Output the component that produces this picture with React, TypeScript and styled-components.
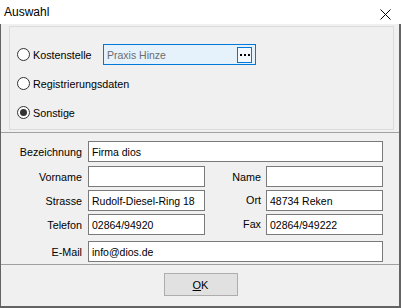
import React from 'react'
import styled, { createGlobalStyle } from 'styled-components'

const GlobalStyle = createGlobalStyle`
  html, body {
    margin: 0;
    padding: 0;
    background-color: #F0F0F0;
  }
  * {
    box-sizing: border-box;
  }
`

const StyledWindow = styled.div`
  width: 401px;
  height: 308px;
  display: flex;
  flex-direction: column;
  background-color: #F0F0F0;
  font-family: "Liberation Sans", Arial, sans-serif;
  color: #000;
  overflow: hidden;
`

const StyledTitleBar = styled.div`
  height: 24px;
  flex-shrink: 0;
  display: flex;
  align-items: center;
  justify-content: space-between;
  background-color: #fff;
  padding: 1px 10px 0 4px;
`

const StyledTitle = styled.span`
  font-size: 12px;
  line-height: 23px;
`

const StyledClose = styled.svg`
  width: 11px;
  height: 11px;
  margin-top: 3px;
`

const StyledBody = styled.div`
  flex: 1;
  display: flex;
  flex-direction: column;
  border-left: 1px solid #646464;
  border-right: 2px solid #646464;
  border-bottom: 2px solid #646464;
`

const StyledTopPanel = styled.div`
  padding: 2px 5px 2px 8px;
  border-bottom: 1px solid #A0A0A0;
`

const StyledGroupBox = styled.div`
  display: flex;
  flex-direction: column;
  border: 1px solid #DCDCDC;
  padding: 13px 0 2px 7px;
`

const StyledOptionRow = styled.div`
  height: 29px;
  display: flex;
  align-items: center;
`

const StyledRadio = styled.span<{ $checked?: boolean }>`
  width: 13px;
  height: 13px;
  border-radius: 50%;
  border: 1px solid #333;
  background-color: #fff;
  display: flex;
  align-items: center;
  justify-content: center;
  flex-shrink: 0;

  &::after {
    content: '';
    display: ${(p) => (p.$checked ? 'block' : 'none')};
    width: 7px;
    height: 7px;
    border-radius: 50%;
    background-color: #333;
  }
`

const StyledOptionLabel = styled.span<{ $width?: number }>`
  font-size: 10.75px;
  margin-left: 3px;
  width: ${(p) => (p.$width ? `${p.$width}px` : 'auto')};
`

const StyledCombo = styled.div`
  width: 153px;
  height: 21px;
  display: flex;
  align-items: center;
  justify-content: space-between;
  border: 1px solid #0078D7;
  background-color: #E5F1FB;
  padding: 0 3px 0 3px;
`

const StyledComboText = styled.span`
  font-size: 10.5px;
  color: #6D6D6D;
`

const StyledEllipsis = styled.div`
  width: 15px;
  height: 16px;
  border: 1px solid #0078D7;
  background-color: #F4F9FD;
  display: flex;
  align-items: center;
  justify-content: center;
`

const StyledFieldsPanel = styled.div`
  padding: 8px 0 2px 0;
  border-bottom: 1px solid #A0A0A0;
`

const StyledFieldRow = styled.div<{ $top: number }>`
  display: grid;
  grid-template-columns: 87px 117px 61px 117px;
  height: 21px;
  margin-top: ${(p) => p.$top}px;
`

const StyledLabel = styled.label<{ $pad: number; $lift?: number }>`
  display: flex;
  align-items: center;
  justify-content: flex-end;
  font-size: 10.75px;
  padding-right: ${(p) => p.$pad}px;
  padding-bottom: ${(p) => (p.$lift ? p.$lift * 2 : 0)}px;
`

const StyledInput = styled.input<{ $wide?: boolean }>`
  grid-column: ${(p) => (p.$wide ? '2 / 5' : 'auto')};
  width: 100%;
  height: 21px;
  border: 1px solid #7A7A7A;
  background-color: #fff;
  padding: 0 3px;
  margin: 0;
  font-family: "Liberation Sans", Arial, sans-serif;
  font-size: 10.5px;
  color: #000;
  outline: none;
`

const StyledButtonPanel = styled.div`
  flex: 1;
  display: flex;
  justify-content: center;
  align-items: flex-start;
  padding-top: 8px;
`

const StyledButton = styled.button`
  width: 74px;
  height: 23px;
  background-color: #E1E1E1;
  border: 1px solid #ADADAD;
  font-family: "Liberation Sans", Arial, sans-serif;
  font-size: 11px;
  color: #000;
  padding: 0;
  margin-left: 1px;

  u {
    text-decoration: underline;
    text-underline-offset: 1px;
  }
`

const Auswahl = () => {
  return (
    <StyledWindow>
      <GlobalStyle />
      <StyledTitleBar>
        <StyledTitle>Auswahl</StyledTitle>
        <StyledClose viewBox="0 0 11 11">
          <path d="M0.5 0.5 L10.5 10.5 M10.5 0.5 L0.5 10.5" stroke="#000" strokeWidth="1" fill="none" />
        </StyledClose>
      </StyledTitleBar>

      <StyledBody>
        <StyledTopPanel>
          <StyledGroupBox>
            <StyledOptionRow>
              <StyledRadio />
              <StyledOptionLabel $width={70}>Kostenstelle</StyledOptionLabel>
              <StyledCombo>
                <StyledComboText>Praxis Hinze</StyledComboText>
                <StyledEllipsis>
                  <svg width="10" height="2" viewBox="0 0 10 2">
                    <rect x="0" y="0" width="2" height="2" fill="#000" />
                    <rect x="4" y="0" width="2" height="2" fill="#000" />
                    <rect x="8" y="0" width="2" height="2" fill="#000" />
                  </svg>
                </StyledEllipsis>
              </StyledCombo>
            </StyledOptionRow>
            <StyledOptionRow>
              <StyledRadio />
              <StyledOptionLabel>Registrierungsdaten</StyledOptionLabel>
            </StyledOptionRow>
            <StyledOptionRow>
              <StyledRadio $checked />
              <StyledOptionLabel>Sonstige</StyledOptionLabel>
            </StyledOptionRow>
          </StyledGroupBox>
        </StyledTopPanel>

        <StyledFieldsPanel>
          <StyledFieldRow $top={0}>
            <StyledLabel $pad={6}>Bezeichnung</StyledLabel>
            <StyledInput $wide readOnly value="Firma dios" />
          </StyledFieldRow>
          <StyledFieldRow $top={4}>
            <StyledLabel $pad={6}>Vorname</StyledLabel>
            <StyledInput readOnly value="" />
            <StyledLabel $pad={5}>Name</StyledLabel>
            <StyledInput readOnly value="" />
          </StyledFieldRow>
          <StyledFieldRow $top={3}>
            <StyledLabel $pad={6}>Strasse</StyledLabel>
            <StyledInput readOnly value="Rudolf-Diesel-Ring 18" />
            <StyledLabel $pad={5} $lift={1}>Ort</StyledLabel>
            <StyledInput readOnly value="48734 Reken" />
          </StyledFieldRow>
          <StyledFieldRow $top={3}>
            <StyledLabel $pad={6}>Telefon</StyledLabel>
            <StyledInput readOnly value="02864/94920" />
            <StyledLabel $pad={5} $lift={1}>Fax</StyledLabel>
            <StyledInput readOnly value="02864/949222" />
          </StyledFieldRow>
          <StyledFieldRow $top={6}>
            <StyledLabel $pad={6}>E-Mail</StyledLabel>
            <StyledInput $wide readOnly value="info@dios.de" />
          </StyledFieldRow>
        </StyledFieldsPanel>

        <StyledButtonPanel>
          <StyledButton type="button"><u>O</u>K</StyledButton>
        </StyledButtonPanel>
      </StyledBody>
    </StyledWindow>
  )
}

export default Auswahl
